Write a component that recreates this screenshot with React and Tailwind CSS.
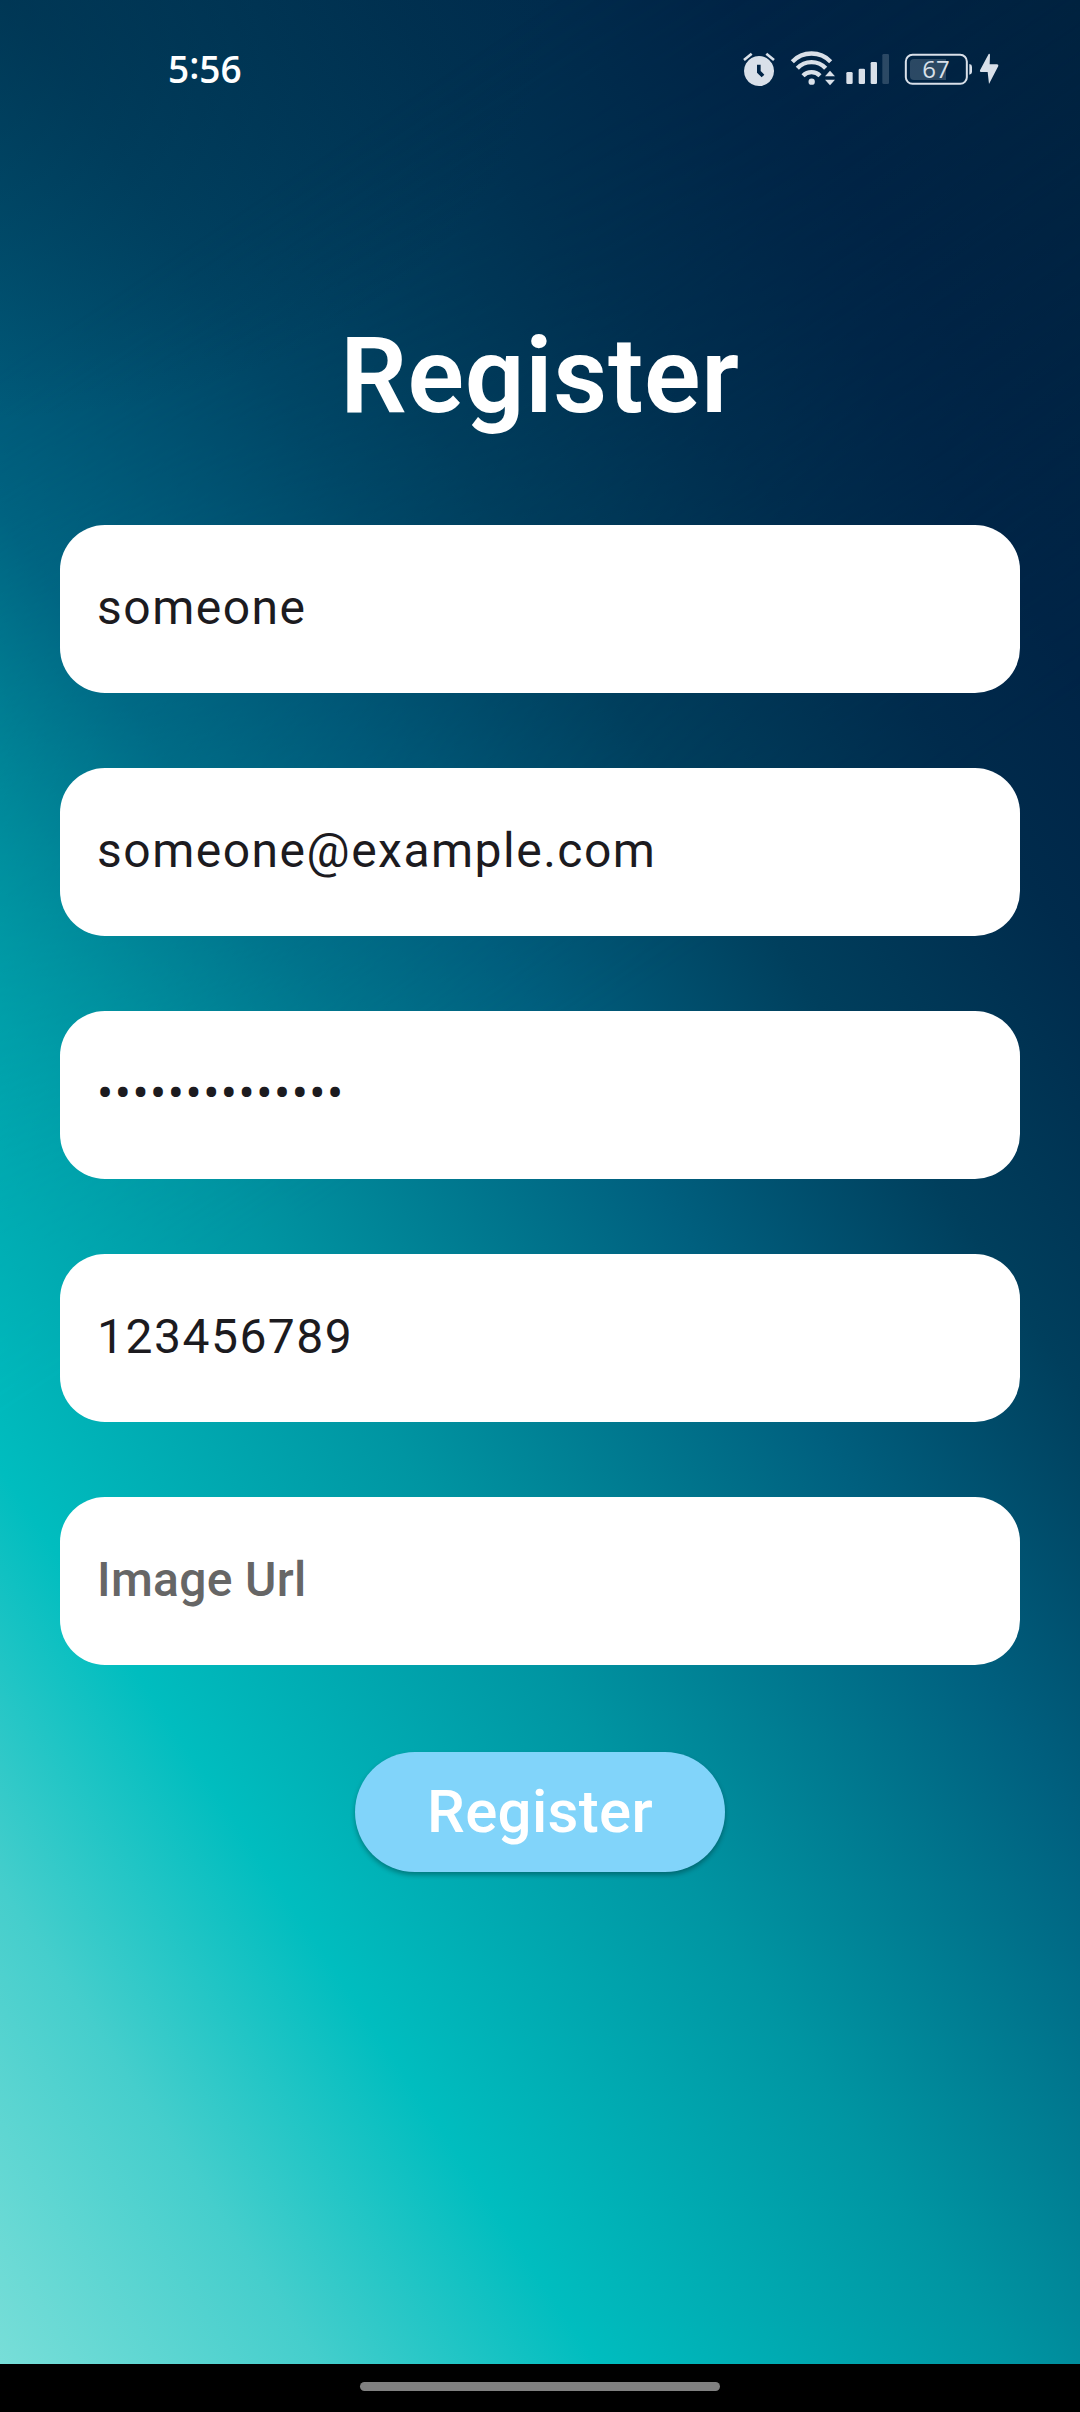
import React from "react";

const fields = [
  { value: "someone" },
  { value: "someone@example.com" },
  { value: "••••••••••••••" },
  { value: "123456789" },
  { value: "Image Url", placeholder: true },
];

function StatusIcon({ viewBox, className, children }) {
  return (
    <svg viewBox={viewBox} className={className} fill="#d9e0e9" aria-hidden="true">
      {children}
    </svg>
  );
}

function StatusBar() {
  return (
    <header className="flex h-[140px] items-start justify-between pt-10 pr-20 pl-[168px]">
      <div className="-mt-px font-['Open_Sans',sans-serif] text-[37px] leading-[60px] font-semibold text-white">
        5<span className="relative -top-[4px]">:</span>56
      </div>
      <div className="flex h-[60px]">
        <StatusIcon viewBox="60 0 120 180" className="mr-2 h-[60px] w-10">
          <path
            fillRule="evenodd"
            d="M117 48a45 45 0 1 0 0.1 0ZM111 74h11v19l11 11-8 8-14-14Z"
          />
          <path d="M72 60 95 41M139 41l23 19" stroke="#d9e0e9" strokeWidth="8" />
        </StatusIcon>
        <StatusIcon viewBox="204 0 150 180" className="mr-1.5 h-[60px] w-[50px]">
          <g fill="none" stroke="#d9e0e9" strokeWidth="13">
            <path d="M217 65a80 80 0 0 1 115 0" />
            <path d="M232 85a58 58 0 0 1 85 0" />
            <path d="M249 107a36 36 0 0 1 51 0" />
          </g>
          <circle cx="275" cy="125" r="9.5" />
          <path d="M315 109 330 92l15 17ZM315 119h30l-15 17Z" />
        </StatusIcon>
        <StatusIcon viewBox="372 0 138 180" className="mr-3.5 h-[60px] w-[46px]">
          <rect x="379" y="96" width="19" height="36" rx="4" />
          <rect x="416" y="86" width="19" height="46" rx="4" />
          <rect x="452" y="66" width="19" height="66" rx="4" />
          <rect x="487" y="42" width="20" height="90" rx="4" opacity="0.2" />
        </StatusIcon>
        <StatusIcon viewBox="552 0 210 180" className="mr-1 h-[60px] w-[70px]">
          <rect x="557.5" y="44.5" width="183" height="87" rx="20" fill="none" stroke="#d9e0e9" strokeWidth="6" />
          <path d="M582 57h96v63h-96a12 12 0 0 1-12-12V69a12 12 0 0 1 12-12Z" opacity="0.2" />
          <path d="M748 72q8 1 8 8v16q0 7-8 8Z" />
          <text
            x="648"
            y="114"
            textAnchor="middle"
            className="font-['Open_Sans',sans-serif] text-[72px] font-medium"
          >
            67
          </text>
        </StatusIcon>
        <StatusIcon viewBox="774 0 66 180" className="h-[60px] w-[22px]">
          <path d="M806 42 780 91q-2 5 3 5h20l4 36 28-54q1-5-4-5h-22l1-29q-1-4-4-2Z" />
        </StatusIcon>
      </div>
    </header>
  );
}

function Field({ value, placeholder }) {
  const tone = placeholder
    ? "font-medium tracking-[0.3px] text-[#666666]"
    : "font-normal tracking-[1.5px] text-[#1c1b1f]";
  return (
    <div className="flex h-[168px] items-center rounded-[45px] bg-white px-[37px] pb-[3px]">
      <span className={`text-[48px] leading-[60px] ${tone}`}>{value}</span>
    </div>
  );
}

export default function App() {
  return (
    <div className="flex h-[2412px] w-[1080px] flex-col overflow-hidden bg-black font-['Roboto',sans-serif]">
      <main className="relative isolate flex h-[2364px] flex-col">
        <div className="absolute inset-0 -z-20 bg-[linear-gradient(56.3deg,#78ded8_0%,#4fd2cd_10%,#00bfc0_22%,#009da8_34%,#00607f_46.5%,#004565_60%,#003252_74%,#002446_87%,#002240_100%)]" />
        <div className="absolute inset-0 -z-10 bg-[linear-gradient(56.3deg,#78ded8_0%,#45cecc_12%,#00bdbf_22.5%,#0095a2_38%,#00607f_54%,#003f5d_65%,#002b4c_76%,#002446_83%,#00233f_100%)] [mask-image:linear-gradient(146.3deg,transparent_12%,black_46%)]" />
        <div className="absolute inset-0 -z-10 bg-[radial-gradient(ellipse_560px_420px_at_0_0,rgba(0,36,64,0.45),rgba(0,36,64,0))]" />
        <StatusBar />
        <h1 className="mt-[177px] text-center text-[105px] leading-[120px] font-semibold tracking-[0.75px] text-white">
          Register
        </h1>
        <form className="mt-[88px] flex flex-col gap-[75px] px-[60px]">
          {fields.map((field) => (
            <Field key={field.value} {...field} />
          ))}
        </form>
        <button className="mt-[87px] h-[120px] w-[370px] self-center rounded-full bg-[#81d4fa] text-[60px] leading-[120px] font-medium tracking-[0.3px] text-white shadow-[0_3px_5px_rgba(0,0,0,0.3)]">
          Register
        </button>
      </main>
      <footer className="flex h-12 justify-center pt-[18px]">
        <div className="h-[9px] w-[360px] rounded-full bg-[#808080]" />
      </footer>
    </div>
  );
}
